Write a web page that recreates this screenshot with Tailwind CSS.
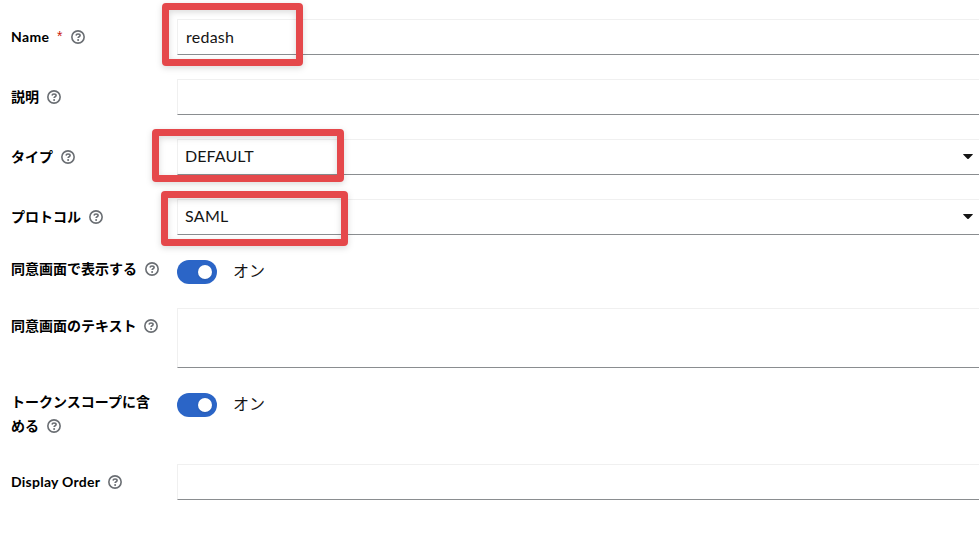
<!DOCTYPE html>
<html lang="ja">
<head>
<meta charset="utf-8">
<title>Client scope</title>
<script src="https://cdn.jsdelivr.net/npm/@tailwindcss/browser@4"></script>
</head>
<body class="bg-white">
<svg class="hidden">
  <symbol id="help" viewBox="0 0 14 14">
    <circle cx="7" cy="7" r="6.15" fill="none" stroke="#6a6e73" stroke-width="1.6"/>
    <path d="M5 5.5C5.2 4.5 6 4 7 4C8.2 4 9.1 4.6 9.1 5.6C9.1 6.8 7.1 6.8 7.1 8.1" fill="none" stroke="#6a6e73" stroke-width="1.6"/>
    <circle cx="7.1" cy="9.9" r="1" fill="#6a6e73"/>
  </symbol>
</svg>
<form class="relative h-[539px] w-[979px] overflow-hidden pl-[11px] pt-[19px] font-['Lato','Noto_Sans_CJK_JP',sans-serif] text-[#151515]">
  <div class="grid grid-cols-[166px_1fr] text-sm font-bold leading-6 text-black">
    <label class="flex h-[60px] items-start pt-1.5"><span class="w-[46px] font-['Lato'] tracking-[0.35px]">Name</span><span class="w-3.5 pt-px font-['Liberation_Sans'] text-sm font-normal text-[#c9190b]">*</span><svg class="mt-[5px] size-3.5"><use href="#help"/></svg></label>
    <div class="h-9 border border-r-0 border-[#f0f0f0] border-b-[#8a8d90] pl-2 pt-[5px] font-['Lato'] text-base font-normal tracking-[0.25px] text-[#151515]">redash</div>

    <label class="flex h-[60px] items-start gap-2 pt-1.5">説明<svg class="mt-[5px] size-3.5"><use href="#help"/></svg></label>
    <div class="h-9 border border-r-0 border-[#f0f0f0] border-b-[#8a8d90]"></div>

    <label class="flex h-[60px] items-start gap-2 pt-1.5">タイプ<svg class="mt-[5px] size-3.5"><use href="#help"/></svg></label>
    <div class="flex h-9 items-center justify-between border border-r-0 border-[#f0f0f0] border-b-[#8a8d90] pb-0.5 pl-[7px] pr-1.5 font-['Lato'] text-base font-normal text-[#151515]"><span class="tracking-[0.1px]">DEFAULT</span><svg class="h-[5px] w-2.5" viewBox="0 0 10 5"><path d="M.5 0H9.5Q10.2.2 9.6.8L5.7 4.7Q5 5.2 4.3 4.7L.4.8Q-.2.2.5 0Z" fill="#151515"/></svg></div>

    <label class="flex h-[60px] items-start gap-2 pt-1.5">プロトコル<svg class="mt-[5px] size-3.5"><use href="#help"/></svg></label>
    <div class="flex h-9 items-center justify-between border border-r-0 border-[#f0f0f0] border-b-[#8a8d90] pb-0.5 pl-[7px] pr-1.5 font-['Lato'] text-base font-normal text-[#151515]"><span class="tracking-[0.3px]">SAML</span><svg class="h-[5px] w-2.5" viewBox="0 0 10 5"><path d="M.5 0H9.5Q10.2.2 9.6.8L5.7 4.7Q5 5.2 4.3 4.7L.4.8Q-.2.2.5 0Z" fill="#151515"/></svg></div>

    <label class="flex h-[49px] items-start gap-2 whitespace-nowrap"><span class="-mt-0.5">同意画面で表示する</span><svg class="mt-[3px] size-3.5"><use href="#help"/></svg></label>
    <div class="flex h-[26px] items-start gap-4 pt-px text-base font-normal leading-6 text-[#151515]"><span class="flex h-6 w-10 shrink-0 items-center justify-end rounded-full bg-[#2b65c7] pr-[5px]"><span class="size-3.5 rounded-full bg-white shadow"></span></span><span class="-mt-px">オン</span></div>

    <label class="flex h-[84px] items-start gap-[7px] whitespace-nowrap pt-1.5">同意画面のテキスト<svg class="mt-[5px] size-3.5"><use href="#help"/></svg></label>
    <div class="h-[60px] border border-r-0 border-[#f0f0f0] border-b-[#8a8d90]"></div>

    <label class="-mt-0.5 h-[74px]">トークンスコープに含<span class="flex items-start gap-2">める<svg class="mt-[5px] size-3.5"><use href="#help"/></svg></span></label>
    <div class="flex h-[26px] items-start gap-4 pt-px text-base font-normal leading-6 text-[#151515]"><span class="flex h-6 w-10 shrink-0 items-center justify-end rounded-full bg-[#2b65c7] pr-[5px]"><span class="size-3.5 rounded-full bg-white shadow"></span></span><span class="-mt-px">オン</span></div>

    <label class="flex h-9 items-start pt-1.5"><span class="w-[97px] whitespace-nowrap font-['Lato'] tracking-[0.25px]">Display Order</span><svg class="mt-[5px] size-3.5"><use href="#help"/></svg></label>
    <div class="h-9 border border-r-0 border-[#f0f0f0] border-b-[#8a8d90]"></div>
  </div>

  <div class="absolute left-[162px] top-[3px] h-[63px] w-[141px] rounded-[4px] border-7 border-[#e5484b] drop-shadow-[0_2px_3px_rgba(0,0,0,0.15)]"></div>
  <div class="absolute left-[152px] top-[129px] h-[53px] w-[192px] rounded-[4px] border-7 border-[#e5484b] drop-shadow-[0_2px_3px_rgba(0,0,0,0.15)]"></div>
  <div class="absolute left-[161px] top-[191px] h-[55px] w-[187px] rounded-[4px] border-7 border-[#e5484b] drop-shadow-[0_2px_3px_rgba(0,0,0,0.15)]"></div>
</form>
</body>
</html>
